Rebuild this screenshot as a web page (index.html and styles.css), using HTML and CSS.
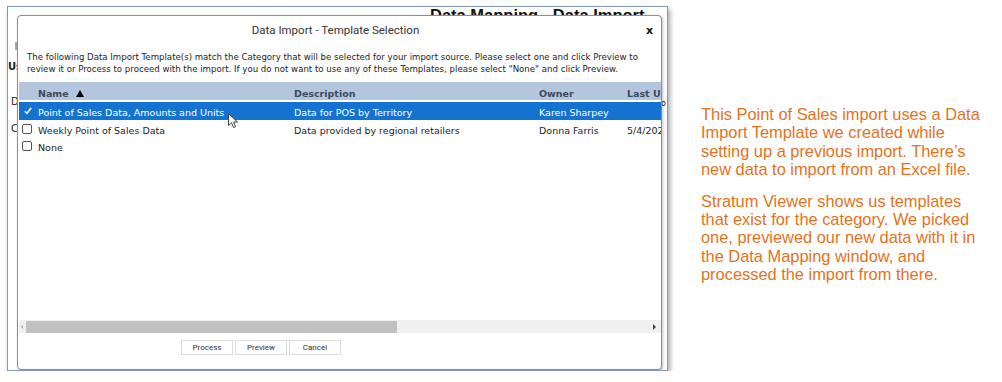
FILE: index.html
```html
<!DOCTYPE html>
<html lang="en">
<head>
    <meta charset="UTF-8">
    <title>Data Import - Template Selection</title>
    <link rel="stylesheet" href="styles.css">
</head>
<body>

    <div class="stage">

        <!-- Captura de la ventana -->
        <div class="shot">
            <div class="page">
                <div class="page-title">Data Mapping - Data Import</div>
                <div class="page-side">
                    <span class="mark"></span>
                    <b class="lbl-us">Us</b>
                    <div class="lbl-row"><span>D</span><span class="edge">o</span></div>
                    <div class="lbl-row lbl-c"><span>C</span></div>
                </div>
            </div>

            <!-- Dialogo -->
            <div class="dialog">
                <div class="dlg-head">
                    <span></span>
                    <span class="dlg-title">Data Import - Template Selection</span>
                    <span class="dlg-close">x</span>
                </div>
                <p class="dlg-text">The following Data Import Template(s) match the Category that will be selected for your import source. Please select one and click Preview to<br>review it or Process to proceed with the import. If you do not want to use any of these Templates, please select "None" and click Preview.</p>

                <div class="grid">
                    <div class="grid-body">
                        <div class="row head">
                            <span></span>
                            <span>Name <svg class="sort" width="8" height="7" viewBox="0 0 8 7"><path d="M4 0 L8 7 L0 7 Z" fill="#000"/></svg></span>
                            <span>Description</span>
                            <span>Owner</span>
                            <span>Last Used</span>
                        </div>
                        <div class="row selected">
                            <span><svg class="tick" width="8" height="8" viewBox="0 0 8 8"><path d="M0.8 4.2 L3 6.4 L7.2 0.8" fill="none" stroke="#fff" stroke-width="1.6"/></svg></span>
                            <span>Point of Sales Data, Amounts and Units</span>
                            <span>Data for POS by Territory</span>
                            <span>Karen Sharpey</span>
                            <span></span>
                        </div>
                        <div class="row">
                            <span><i class="box"></i></span>
                            <span>Weekly Point of Sales Data</span>
                            <span>Data provided by regional retailers</span>
                            <span>Donna Farris</span>
                            <span>5/4/2023</span>
                        </div>
                        <div class="row">
                            <span><i class="box"></i></span>
                            <span>None</span>
                            <span></span>
                            <span></span>
                            <span></span>
                        </div>
                        <svg class="pointer" width="11" height="16" viewBox="0 0 11 16"><path d="M0.5 0.5 L0.5 12.5 L3.5 9.8 L5.6 14.6 L7.6 13.7 L5.6 9 L9.5 9 Z" fill="#fff" stroke="#444" stroke-width="1"/></svg>
                    </div>
                    <div class="hscroll">
                        <span class="arrow-left"></span>
                        <span class="thumb"></span>
                        <span class="arrow-right"></span>
                    </div>
                </div>

                <div class="dlg-foot">
                    <button>Process</button>
                    <button>Preview</button>
                    <button>Cancel</button>
                </div>
            </div>
        </div>

        <!-- Nota -->
        <div class="note">
            <p>This Point of Sales import uses a Data Import Template we created while setting up a previous import. There’s new data to import from an Excel file.</p>
            <p>Stratum Viewer shows us templates that exist for the category. We picked one, previewed our new data with it in the Data Mapping window, and processed the import from there.</p>
        </div>

    </div>

</body>
</html>
```

FILE: styles.css
```css
:root {
    --color-naranja: #e5721c; /* texto de la nota */
    --color-marco: #8199c2;
    --color-cabecera: #b3c6de;
    --color-seleccion: #1473d1;
}

body {
    margin: 0;
    background-color: white;
    font-family: "DejaVu Sans", Verdana, sans-serif;
}

.stage {
    display: flex;
    align-items: flex-start;
    padding: 6px 0 0 7px;
}

/* Marco de la captura */
.shot {
    position: relative;
    box-sizing: border-box;
    width: 661px;
    height: 365px;
    border: 1px solid var(--color-marco);
    background-color: white;
    overflow: hidden;
    box-shadow: 2px 3px 5px rgba(0, 0, 0, 0.35);
}

.page-title {
    margin-top: -1px;
    padding-left: 422px;
    font-family: "Liberation Sans", Arial, sans-serif;
    font-weight: bold;
    font-size: 16.5px;
    line-height: 19px;
    color: #111;
}

.page-side {
    display: flex;
    flex-direction: column;
    font-size: 10px;
    line-height: 12px;
    color: #222;
}

.mark {
    width: 2px;
    height: 8px;
    margin: 17px 0 0 7px;
    background-color: #a9a9a9;
}

.lbl-us {
    margin-top: 11px;
}

.lbl-row {
    display: flex;
    justify-content: space-between;
    margin-top: 23px;
    padding-left: 3px;
}

.lbl-row .edge {
    margin-top: 2px;
    padding-right: 1px;
    font-size: 8px;
}

.lbl-c {
    margin-top: 13px;
}

/* Dialogo */
.dialog {
    position: absolute;
    left: 9px;
    top: 8px;
    box-sizing: border-box;
    width: 645px;
    height: 355px;
    display: flex;
    flex-direction: column;
    background-color: white;
    border: 1px solid #8e8e8e;
    border-radius: 4px;
    box-shadow: 1px 1px 3px rgba(0, 0, 0, 0.25);
}

.dlg-head {
    display: grid;
    grid-template-columns: 1fr auto 1fr;
    align-items: center;
    height: 28px;
    padding-right: 8px;
}

.dlg-title {
    font-family: Roboto, sans-serif;
    font-size: 11.5px;
    color: #333;
}

.dlg-close {
    justify-self: end;
    font-weight: bold;
    font-size: 11px;
    color: #111;
}

.dlg-text {
    margin: 7px 0 0 0;
    padding-left: 9px;
    font-size: 8.6px;
    line-height: 12px;
    color: #1e1e1e;
    white-space: nowrap;
}

.grid {
    display: flex;
    flex-direction: column;
    height: 251px;
    margin: 7px 0 0 1px;
}

.grid-body {
    position: relative;
    flex: 1;
    overflow: hidden;
}

.row {
    display: grid;
    grid-template-columns: 19px 256px 245px 88px 120px;
    box-sizing: border-box;
    height: 17.5px;
    padding-top: 4px;
    font-size: 9.5px;
    line-height: 13.5px;
    color: #1e1e1e;
    white-space: nowrap;
}

.row.head {
    height: 20px;
    padding-top: 5px;
    line-height: 13px;
    font-weight: bold;
    color: #3d4a5e;
    background-color: var(--color-cabecera);
    border-bottom: 2px solid white;
}

.row.selected {
    background-color: var(--color-seleccion);
    color: white;
}

.sort {
    margin-left: 4px;
    vertical-align: 0;
}

.tick {
    margin: 1px 0 0 5px;
    display: block;
}

.box {
    display: block;
    box-sizing: border-box;
    width: 10px;
    height: 10px;
    margin: 0 0 0 3px;
    border: 1px solid #555;
    border-radius: 2px;
}

.pointer {
    position: absolute;
    left: 209px;
    top: 31px;
}

.hscroll {
    display: flex;
    align-items: center;
    height: 13px;
    background-color: #f0f0f0;
}

.arrow-left {
    width: 0;
    height: 0;
    margin: 0 3px 0 2px;
    border-top: 2.5px solid transparent;
    border-bottom: 2.5px solid transparent;
    border-right: 2px solid #a8a8a8;
}

.thumb {
    width: 371px;
    height: 12px;
    background-color: #c1c1c1;
}

.arrow-right {
    width: 0;
    height: 0;
    margin: 0 5px 0 auto;
    border-top: 3px solid transparent;
    border-bottom: 3px solid transparent;
    border-left: 3px solid #444;
}

.dlg-foot {
    display: flex;
    gap: 2px;
    padding: 7px 0 0 163px;
}

.dlg-foot button {
    box-sizing: border-box;
    width: 52px;
    height: 15px;
    padding: 0;
    background-color: white;
    border: 1px solid #dcdcdc;
    font-family: Roboto, sans-serif;
    font-size: 8px;
    color: #333;
}

/* Nota a la derecha */
.note {
    width: 284px;
    margin: 99px 0 0 33px;
    font-family: "Liberation Sans", Arial, sans-serif;
    font-size: 16.4px;
    line-height: 18.4px;
    color: var(--color-naranja);
}

.note p {
    margin: 0 0 13px 0;
}
```
